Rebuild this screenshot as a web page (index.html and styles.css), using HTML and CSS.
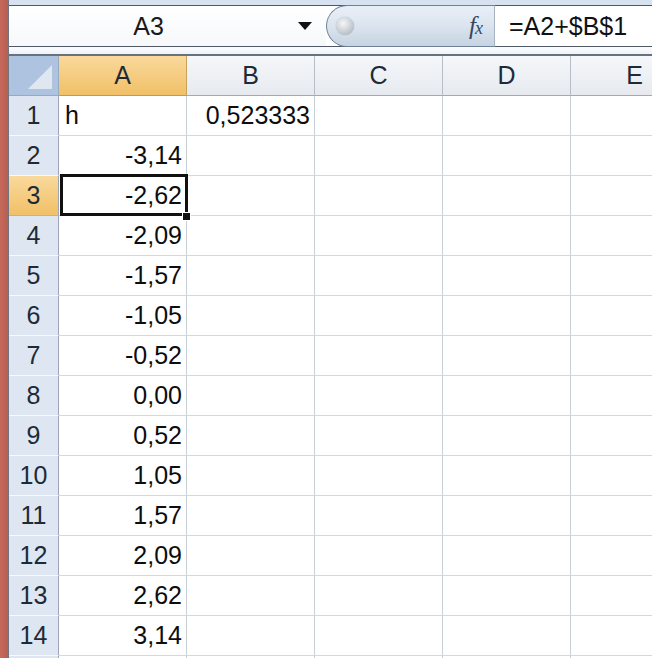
FILE: index.html
```html
<!DOCTYPE html>
<html>
<head>
<meta charset="utf-8">
<link rel="stylesheet" href="styles.css">
</head>
<body>
<div class="app">
  <div class="strip"></div>
  <div class="main">
    <div class="topband"></div>
    <div class="fbar">
      <div class="namebox">
        <span class="name">A3</span>
        <span class="drop"></span>
      </div>
      <div class="pill">
        <span class="knob"></span>
        <span class="fx">f<span class="fxx">x</span></span>
      </div>
      <div class="formula">=A2+$B$1</div>
    </div>
    <div class="gap"></div>
    <div class="grid">
      <div class="corner"><span class="tri"></span></div>
      <div class="ch sel">A</div>
      <div class="ch">B</div>
      <div class="ch">C</div>
      <div class="ch">D</div>
      <div class="ch">E</div>

      <div class="rh">1</div><div class="c left">h</div><div class="c">0,523333</div><div class="c"></div><div class="c"></div><div class="c"></div>
      <div class="rh">2</div><div class="c">-3,14</div><div class="c"></div><div class="c"></div><div class="c"></div><div class="c"></div>
      <div class="rh sel">3</div><div class="c active">-2,62</div><div class="c"></div><div class="c"></div><div class="c"></div><div class="c"></div>
      <div class="rh">4</div><div class="c">-2,09</div><div class="c"></div><div class="c"></div><div class="c"></div><div class="c"></div>
      <div class="rh">5</div><div class="c">-1,57</div><div class="c"></div><div class="c"></div><div class="c"></div><div class="c"></div>
      <div class="rh">6</div><div class="c">-1,05</div><div class="c"></div><div class="c"></div><div class="c"></div><div class="c"></div>
      <div class="rh">7</div><div class="c">-0,52</div><div class="c"></div><div class="c"></div><div class="c"></div><div class="c"></div>
      <div class="rh">8</div><div class="c">0,00</div><div class="c"></div><div class="c"></div><div class="c"></div><div class="c"></div>
      <div class="rh">9</div><div class="c">0,52</div><div class="c"></div><div class="c"></div><div class="c"></div><div class="c"></div>
      <div class="rh">10</div><div class="c">1,05</div><div class="c"></div><div class="c"></div><div class="c"></div><div class="c"></div>
      <div class="rh">11</div><div class="c">1,57</div><div class="c"></div><div class="c"></div><div class="c"></div><div class="c"></div>
      <div class="rh">12</div><div class="c">2,09</div><div class="c"></div><div class="c"></div><div class="c"></div><div class="c"></div>
      <div class="rh">13</div><div class="c">2,62</div><div class="c"></div><div class="c"></div><div class="c"></div><div class="c"></div>
      <div class="rh">14</div><div class="c">3,14</div><div class="c"></div><div class="c"></div><div class="c"></div><div class="c"></div>
      <div class="rh"></div><div class="c"></div><div class="c"></div><div class="c"></div><div class="c"></div><div class="c"></div>
    </div>
  </div>
</div>
</body>
</html>
```

FILE: styles.css
```css
html, body {
  margin: 0;
  padding: 0;
  background: #ffffff;
  overflow: hidden;
}
body {
  width: 652px;
  height: 658px;
  font-family: "Liberation Sans", Arial, sans-serif;
  color: #111;
}
.app {
  display: flex;
  width: 652px;
  height: 658px;
  overflow: hidden;
}
.strip {
  width: 8px;
  flex: none;
  background: linear-gradient(90deg, #c66a5b, #b85e52);
}
.main {
  flex: 1;
  min-width: 0;
  border-left: 1px solid #6e757f;
  display: flex;
  flex-direction: column;
  overflow: hidden;
}
.topband {
  height: 5px;
  background: #d6e2f0;
  flex: none;
}
.fbar {
  display: flex;
  flex: none;
  border-top: 1px solid #4f5864;
  border-bottom: 1px solid #4f5864;
  box-sizing: border-box;
  height: 42px;
  background: #fff;
}
.namebox {
  width: 317px;
  flex: none;
  display: flex;
  align-items: center;
  background: linear-gradient(#ffffff, #f6f8fb);
}
.name {
  flex: 1;
  text-align: center;
  font-size: 25px;
  padding-left: 4px;
  color: #1a1a1a;
}
.drop {
  width: 0;
  height: 0;
  border-left: 7px solid transparent;
  border-right: 7px solid transparent;
  border-top: 8px solid #111;
  margin-right: 14px;
  margin-left: 14px;
}
.pill {
  width: 169px;
  flex: none;
  box-sizing: border-box;
  margin-top: -1px;
  margin-bottom: -1px;
  border: 1px solid #6f8197;
  border-right: 1px solid #a7b3c1;
  border-radius: 22px 0 0 22px;
  background: linear-gradient(#e9eff7 0%, #dbe4ef 50%, #c7d3e2 100%);
  display: flex;
  align-items: center;
  justify-content: space-between;
  padding: 0 12px 0 9px;
}
.knob {
  width: 18px;
  height: 18px;
  border-radius: 50%;
  background: radial-gradient(circle at 40% 35%, #f4f6f8 0%, #c9ced4 55%, #9ea6b0 100%);
  box-shadow: 0 0 1px #8d97a3;
}
.fx {
  font-family: "Liberation Serif", "Times New Roman", serif;
  font-style: italic;
  font-size: 25px;
  color: #34475e;
  letter-spacing: -1px;
}
.fxx {
  font-size: 18px;
}
.formula {
  flex: 1;
  display: flex;
  align-items: center;
  padding-left: 14px;
  font-size: 25px;
  color: #111;
  white-space: nowrap;
}
.gap {
  flex: none;
  background: linear-gradient(#fbfcfe, #eef3f9);
  border-bottom: 2px solid #68727e;
  box-sizing: border-box;
  height: 9px;
}
.grid {
  display: grid;
  grid-template-columns: 50px 128px 128px 128px 128px 128px;
  grid-template-rows: 40px repeat(15, 40px);
  flex: none;
}
.corner {
  background: #aec3df;
  border-right: 1px solid #9aaabe;
  border-bottom: 1px solid #9aaabe;
  position: relative;
  box-sizing: border-box;
  overflow: hidden;
}
.tri {
  position: absolute;
  right: 6px;
  bottom: 6px;
  width: 0;
  height: 0;
  border-left: 24px solid transparent;
  border-bottom: 24px solid #dfe7f1;
}
.ch {
  box-sizing: border-box;
  display: flex;
  align-items: center;
  justify-content: center;
  font-size: 25px;
  color: #1e2a38;
  background: linear-gradient(#f5f7fa, #e6eaef);
  border-right: 1px solid #b7bec8;
  border-bottom: 1px solid #9fabb9;
}
.ch.sel {
  background: linear-gradient(#f9d99c, #f1c068);
  border-right-color: #c9a35c;
  border-bottom-color: #c29a4f;
}
.rh {
  box-sizing: border-box;
  display: flex;
  align-items: center;
  justify-content: center;
  font-size: 25px;
  color: #1e2a38;
  background: #dde6f1;
  border-right: 1px solid #9aa6b5;
  border-bottom: 1px solid #f7f9fc;
}
.rh.sel {
  background: linear-gradient(#f9d99c, #f1c068);
  border-bottom-color: #d7b069;
}
.c {
  box-sizing: border-box;
  border-right: 1px solid #c9cfd6;
  border-bottom: 1px solid #d3d8de;
  display: flex;
  align-items: center;
  justify-content: flex-end;
  padding-right: 4px;
  font-size: 25px;
  color: #0d0d0d;
  background: #fff;
}
.c.left {
  justify-content: flex-start;
  padding-left: 6px;
}
.active {
  position: relative;
}
.active::after {
  content: "";
  position: absolute;
  left: 1px;
  top: -2px;
  right: -2px;
  bottom: -1px;
  border: 3px solid #111;
}
.active::before {
  content: "";
  position: absolute;
  right: -5px;
  bottom: -6px;
  width: 7px;
  height: 7px;
  background: #111;
  border: 1px solid #fff;
  z-index: 2;
}
```
